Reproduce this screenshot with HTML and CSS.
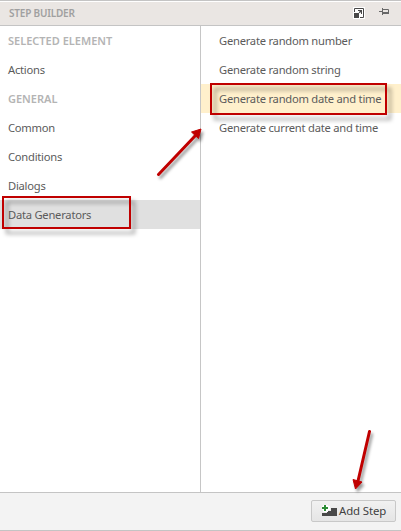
FILE: index.html
```html
<!DOCTYPE html>
<html lang="en">
<head>
<meta charset="utf-8">
<title>Step Builder</title>
<link rel="stylesheet" href="styles.css">
</head>
<body>
<div class="panel">
  <header class="header">
    <h1 class="title">STEP BUILDER</h1>
    <svg class="icon-expand" width="12" height="12" viewBox="0 0 12 12">
      <path fill="#fff" d="M0 0h12v12H0z"/>
      <path fill="none" stroke="#484848" d="M1.500 5V1.500H10.500V10.500H7"/>
      <path fill="#484848" d="M1 6h5v5H1zM5 3h4v4H8V5L6.700 6.300 5.700 5.300 7 4H5z"/>
    </svg>
    <svg class="icon-pin" width="11" height="8" viewBox="0 0 11 8">
      <path fill="none" stroke="#686868" d="M0 3.500h3M3.500 0v7M4 1.500h5.500v4"/>
      <path fill="#686868" d="M4 4h6v2H4z"/>
    </svg>
  </header>
  <main class="columns">
    <nav class="categories">
      <div class="row heading">SELECTED ELEMENT</div>
      <div class="row">Actions</div>
      <div class="row heading">GENERAL</div>
      <div class="row">Common</div>
      <div class="row">Conditions</div>
      <div class="row">Dialogs</div>
      <div class="row selected">Data Generators<span class="callout callout-category"></span></div>
    </nav>
    <section class="steps">
      <div class="row">Generate random number</div>
      <div class="row">Generate random string</div>
      <div class="row highlighted">Generate random date and time<span class="callout callout-step"></span></div>
      <div class="row">Generate current date and time</div>
    </section>
  </main>
  <footer class="footer">
    <button class="add">
      <svg width="15" height="12" viewBox="0 0 15 12">
        <path fill="#484848" d="M0 8h5V6h4V3h6v8H0z"/>
        <path fill="#fff" d="M1 0h5v1h2v4H6v2H1V5H0V1h1z"/>
        <path fill="#2c8c35" d="M2 0h2v2h2v2H4v2H2V4H0V2h2z"/>
      </svg>
      <span>Add Step</span>
    </button>
  </footer>
  <svg class="arrows" width="401" height="531" viewBox="0 0 401 531">
    <path class="shaft" d="M158.500 174.500L195 136M369.500 431.500L358 481"/>
    <path class="head" d="M201 129L198.500 138.500 191.500 132zM355.500 489L353 479.500 362 482z"/>
  </svg>
</div>
</body>
</html>
```
FILE: styles.css
```css
* { box-sizing: border-box; }

body {
  margin: 0;
  font-family: "Noto Sans", sans-serif;
  font-size: 11.2px;
  letter-spacing: -.24px;
  color: #5b5b5b;
}

.panel {
  position: relative;
  display: flex;
  flex-direction: column;
  width: 401px;
  height: 531px;
  overflow: hidden;
  background: #fff;
}

.header {
  display: flex;
  align-items: center;
  flex: none;
  height: 26px;
  padding: 0 11px 0 9px;
  border-top: 1px solid #c4c4c4;
  border-bottom: 1px solid #c4c4c4;
  background: #eae6e3;
  box-shadow: inset 0 1px #fff;
}

.title {
  flex: 1;
  margin: 0;
  font-size: 10px;
  font-weight: 600;
  letter-spacing: -.2px;
  color: #a0a0a0;
}

.icon-expand { margin-right: 14px; }
.icon-pin { margin-bottom: 3px; }

.columns {
  display: flex;
  flex: 1;
}

.categories {
  width: 201px;
  border-right: 1px solid #c6c6c6;
}

.steps { flex: 1; }

.row {
  position: relative;
  height: 29px;
  padding-left: 8px;
  line-height: 29px;
  white-space: nowrap;
}

.steps .row { padding-left: 18px; }

.heading {
  font-size: 11px;
  font-weight: 600;
  letter-spacing: 0;
  color: #b4b4b4;
}

.selected { background: #e0e0e0; }
.highlighted { background: #fff0cc; }

.callout {
  position: absolute;
  border: 2px solid #c00000;
  filter: drop-shadow(4px 5px 2px rgba(0, 0, 0, .4));
}

.callout-category {
  left: 2px;
  top: -4px;
  width: 129px;
  height: 33px;
}

.callout-step {
  left: 9px;
  top: -1px;
  width: 177px;
  height: 32px;
}

.footer {
  display: flex;
  justify-content: flex-end;
  align-items: flex-start;
  flex: none;
  height: 39px;
  padding: 7px 5px 0 0;
  border-top: 1px solid #c4c4c4;
  border-bottom: 1px solid #c4c4c4;
  background: #f3f3f3;
}

.add {
  display: flex;
  align-items: center;
  gap: 2px;
  width: 85px;
  height: 22px;
  padding: 0 0 2px 10px;
  border: 1px solid #c8c8c8;
  border-radius: 2px;
  background: linear-gradient(#f1f1f1, #e5e5e5);
  font: inherit;
  font-size: 11.4px;
  letter-spacing: -.1px;
  color: #404040;
  white-space: nowrap;
}

.add svg { margin-top: 2px; }

.arrows {
  position: absolute;
  left: 0;
  top: 0;
  filter: drop-shadow(2px 3px 1.5px rgba(0, 0, 0, .4));
}

.shaft {
  fill: none;
  stroke: #c00000;
  stroke-width: 3;
  stroke-linecap: round;
}

.head {
  fill: #c00000;
  stroke: #c00000;
  stroke-width: 1;
}
```
